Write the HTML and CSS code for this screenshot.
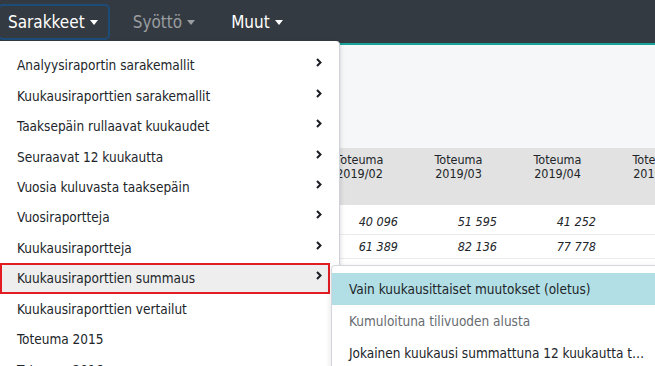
FILE: index.html
```html
<!DOCTYPE html>
<html lang="fi">
<head>
    <meta charset="UTF-8">
    <meta name="viewport" content="width=device-width, initial-scale=1.0">
    <title>Raportti</title>
    <link rel="stylesheet" href="styles.css">
</head>
<body>
    <nav class="topbar">
        <a href="#" class="nav-link active">Sarakkeet <span class="caret"></span></a>
        <a href="#" class="nav-link muted">Syöttö <span class="caret"></span></a>
        <a href="#" class="nav-link">Muut <span class="caret"></span></a>
    </nav>

    <main class="content">
        <table class="report">
            <thead>
                <tr>
                    <th class="name"></th>
                    <th></th>
                    <th>Toteuma<br>2019/02</th>
                    <th>Toteuma<br>2019/03</th>
                    <th>Toteuma<br>2019/04</th>
                    <th>Toteuma<br>2019/05</th>
                </tr>
            </thead>
            <tbody>
                <tr>
                    <td class="name"></td>
                    <td></td>
                    <td>40 096</td>
                    <td>51 595</td>
                    <td>41 252</td>
                    <td></td>
                </tr>
                <tr>
                    <td class="name"></td>
                    <td></td>
                    <td>61 389</td>
                    <td>82 136</td>
                    <td>77 778</td>
                    <td></td>
                </tr>
                <tr>
                    <td class="name"></td>
                    <td></td>
                    <td>4 029</td>
                    <td>4 107</td>
                    <td>4 005</td>
                    <td></td>
                </tr>
            </tbody>
        </table>
    </main>

    <div class="dropdown">
        <ul class="menu">
            <li class="item">Analyysiraportin sarakemallit <svg class="chev" width="6" height="9" viewBox="0 0 6 9"><path d="M1 1 L4.5 4.5 L1 8" fill="none" stroke="#1a1d24" stroke-width="2"/></svg></li>
            <li class="item">Kuukausiraporttien sarakemallit <svg class="chev" width="6" height="9" viewBox="0 0 6 9"><path d="M1 1 L4.5 4.5 L1 8" fill="none" stroke="#1a1d24" stroke-width="2"/></svg></li>
            <li class="item">Taaksepäin rullaavat kuukaudet <svg class="chev" width="6" height="9" viewBox="0 0 6 9"><path d="M1 1 L4.5 4.5 L1 8" fill="none" stroke="#1a1d24" stroke-width="2"/></svg></li>
            <li class="item">Seuraavat 12 kuukautta <svg class="chev" width="6" height="9" viewBox="0 0 6 9"><path d="M1 1 L4.5 4.5 L1 8" fill="none" stroke="#1a1d24" stroke-width="2"/></svg></li>
            <li class="item">Vuosia kuluvasta taaksepäin <svg class="chev" width="6" height="9" viewBox="0 0 6 9"><path d="M1 1 L4.5 4.5 L1 8" fill="none" stroke="#1a1d24" stroke-width="2"/></svg></li>
            <li class="item">Vuosiraportteja <svg class="chev" width="6" height="9" viewBox="0 0 6 9"><path d="M1 1 L4.5 4.5 L1 8" fill="none" stroke="#1a1d24" stroke-width="2"/></svg></li>
            <li class="item">Kuukausiraportteja <svg class="chev" width="6" height="9" viewBox="0 0 6 9"><path d="M1 1 L4.5 4.5 L1 8" fill="none" stroke="#1a1d24" stroke-width="2"/></svg></li>
            <li class="item open">Kuukausiraporttien summaus <svg class="chev" width="6" height="9" viewBox="0 0 6 9"><path d="M1 1 L4.5 4.5 L1 8" fill="none" stroke="#1a1d24" stroke-width="2"/></svg>
                <ul class="submenu">
                    <li class="sub-item selected">Vain kuukausittaiset muutokset (oletus)</li>
                    <li class="sub-item disabled">Kumuloituna tilivuoden alusta</li>
                    <li class="sub-item">Jokainen kuukausi summattuna 12 kuukautta taaksepäin</li>
                </ul>
            </li>
            <li class="item">Kuukausiraporttien vertailut</li>
            <li class="item">Toteuma 2015</li>
            <li class="item">Toteuma 2016</li>
        </ul>
    </div>
</body>
</html>
```

FILE: styles.css
```css
:root {
    --nav: #343a41;
    --teal: #17a398;
    --text: #212529;
    --band: #e2e2e2;
    --page: #f6f7f9;
}

* {
    font-family: "DejaVu Sans Condensed", "DejaVu Sans", sans-serif;
    padding: 0px;
    margin: 0px;
    box-sizing: border-box;
}

html,
body {
    height: 100vh;
    overflow: hidden;
    background-color: var(--page);
}

body {
    position: relative;
}

/* top navigation */
.topbar {
    display: flex;
    align-items: center;
    gap: 14px;
    height: 45px;
    background-color: var(--nav);
    border-bottom: 2px solid var(--teal);
}

.nav-link {
    display: flex;
    align-items: center;
    height: 36px;
    padding: 0px 10px 0px 8px;
    border: 2px solid transparent;
    border-radius: 5px;
    color: #ffffff;
    font-size: 17px;
    text-decoration: none;
}

.nav-link.active {
    margin-left: -2px;
    margin-right: -1px;
    border-color: #1d4c79;
}

.nav-link.muted {
    color: #9a9da2;
}

.caret {
    display: inline-block;
    margin-left: 5px;
    margin-top: 1px;
    border-top: 5px solid currentColor;
    border-left: 4px solid transparent;
    border-right: 4px solid transparent;
}

/* report table */
.content {
    padding-top: 103px;
}

table.report {
    table-layout: fixed;
    width: 706px;
    border-collapse: collapse;
    font-size: 12.5px;
    color: var(--text);
}

table.report th {
    width: 99px;
    height: 57px;
    padding-top: 5px;
    vertical-align: top;
    font-weight: normal;
    line-height: 14px;
    text-align: center;
    background-color: var(--band);
}

table.report th.name {
    width: 211px;
}

table.report td {
    height: 24px;
    padding-right: 11px;
    text-align: right;
    font-style: italic;
    background-color: #ffffff;
    border-bottom: 1px solid #ececec;
}

table.report tbody tr:first-child td {
    height: 29px;
    padding-top: 5px;
}

/* dropdown menu */
.dropdown {
    position: absolute;
    top: 41px;
    left: 0px;
    width: 340px;
    height: 340px;
    background-color: #ffffff;
    border-right: 1px solid #cfd2d6;
    border-top-right-radius: 4px;
    box-shadow: 1px 1px 4px rgba(0, 0, 0, 0.12);
}

.menu {
    list-style: none;
    padding: 9px 9px 0px 0px;
}

.item {
    position: relative;
    display: flex;
    justify-content: space-between;
    align-items: center;
    height: 30.44px;
    padding: 0px 8px 0px 17px;
    font-size: 13.5px;
    color: var(--text);
    white-space: nowrap;
}

.chev {
    margin-top: -5px;
}

.item.open {
    background-color: #eeeeee;
    outline: 2px solid #e31b23;
    outline-offset: -2px;
}

/* submenu */
.submenu {
    position: absolute;
    top: 2px;
    left: calc(100% + 1px);
    width: 340px;
    padding: 7px 0px;
    list-style: none;
    background-color: #ffffff;
    border: 1px solid #d3d6da;
    border-radius: 4px;
    box-shadow: 0px 2px 6px rgba(0, 0, 0, 0.12);
}

.sub-item {
    height: 32px;
    line-height: 32px;
    padding: 0px 25px 0px 17px;
    font-size: 13.5px;
    color: var(--text);
    white-space: nowrap;
    overflow: hidden;
    text-overflow: ellipsis;
}

.sub-item.selected {
    background-color: #b1dfe5;
}

.sub-item.disabled {
    color: #666b70;
}
```
